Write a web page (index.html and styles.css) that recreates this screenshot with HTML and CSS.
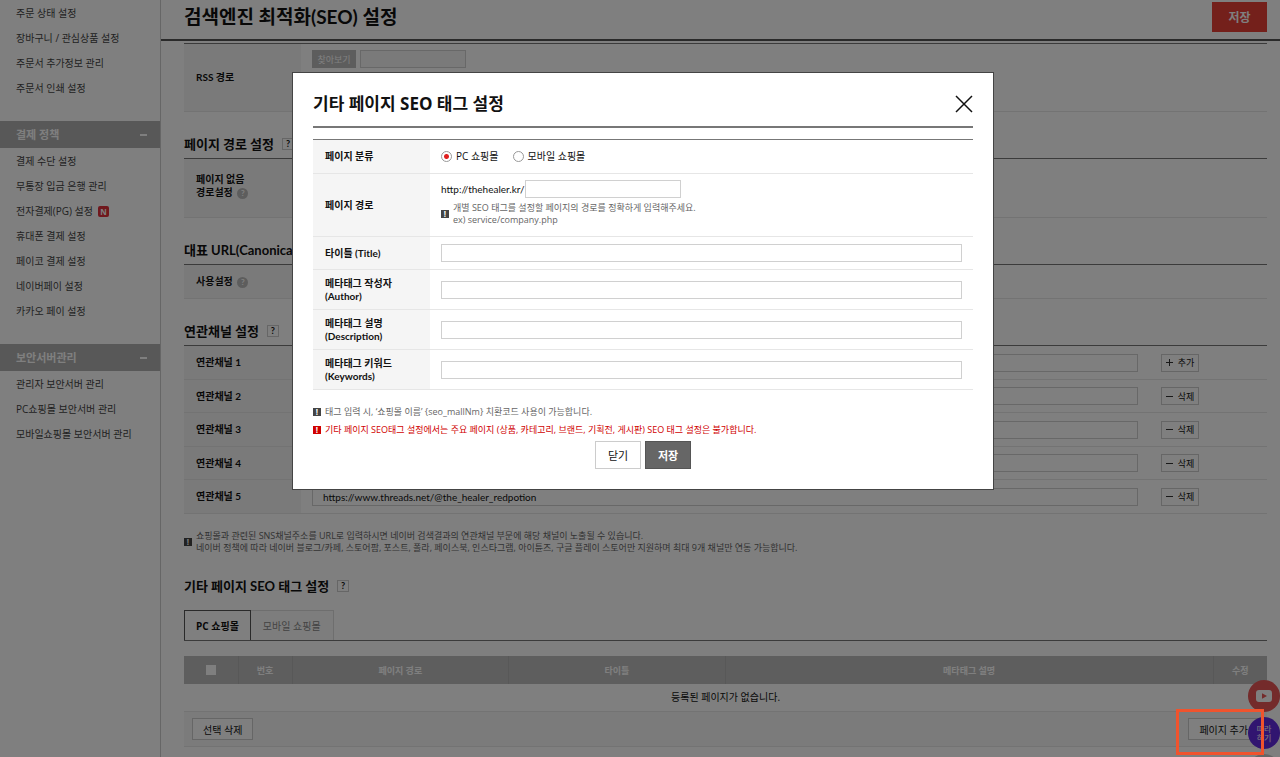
FILE: index.html
```html
<!DOCTYPE html>
<html lang="ko">
<head>
    <meta charset="UTF-8">
    <meta name="viewport" content="width=device-width, initial-scale=1.0">
    <title>검색엔진 최적화(SEO) 설정</title>
    <link rel="stylesheet" href="styles.css">
</head>
<body>

<div class="wrap">
    <!-- Left menu -->
    <nav class="sidebar">
        <ul>
            <li><a href="#">주문 상태 설정</a></li>
            <li><a href="#">장바구니 / 관심상품 설정</a></li>
            <li><a href="#">주문서 추가정보 관리</a></li>
            <li><a href="#">주문서 인쇄 설정</a></li>
        </ul>
        <h2>결제 정책 <span class="fold"></span></h2>
        <ul>
            <li><a href="#">결제 수단 설정</a></li>
            <li><a href="#">무통장 입금 은행 관리</a></li>
            <li><a href="#">전자결제(PG) 설정 <span class="new">N</span></a></li>
            <li><a href="#">휴대폰 결제 설정</a></li>
            <li><a href="#">페이코 결제 설정</a></li>
            <li><a href="#">네이버페이 설정</a></li>
            <li><a href="#">카카오 페이 설정</a></li>
        </ul>
        <h2>보안서버관리 <span class="fold"></span></h2>
        <ul>
            <li><a href="#">관리자 보안서버 관리</a></li>
            <li><a href="#">PC쇼핑몰 보안서버 관리</a></li>
            <li><a href="#">모바일쇼핑몰 보안서버 관리</a></li>
        </ul>
    </nav>

    <main class="main">
        <header class="page-header">
            <h1>검색엔진 최적화(SEO) 설정</h1>
            <button type="button" class="btn-save">저장</button>
        </header>

        <div class="content">
            <table class="form-table form-rss">
                <tr>
                    <th scope="row"><label for="rss">RSS 경로</label></th>
                    <td>
                        <div class="file-row">
                            <button type="button" class="btn-file">찾아보기</button>
                            <input type="text" id="rss" class="file-name">
                        </div>
                    </td>
                </tr>
            </table>

            <h3>페이지 경로 설정 <button type="button" class="help">?</button></h3>
            <table class="form-table form-path">
                <tr>
                    <th scope="row">페이지 없음<br>경로설정 <span class="tip">?</span></th>
                    <td></td>
                </tr>
            </table>

            <h3>대표 URL(Canonical URL) 설정 <button type="button" class="help">?</button></h3>
            <table class="form-table form-canonical">
                <tr>
                    <th scope="row">사용설정 <span class="tip">?</span></th>
                    <td></td>
                </tr>
            </table>

            <h3>연관채널 설정 <button type="button" class="help">?</button></h3>
            <table class="form-table form-channel">
                <tr>
                    <th scope="row"><label for="ch1">연관채널 1</label></th>
                    <td><input type="text" id="ch1"></td>
                    <td class="action"><button type="button" class="btn-small"><span class="plus"></span>추가</button></td>
                </tr>
                <tr>
                    <th scope="row"><label for="ch2">연관채널 2</label></th>
                    <td><input type="text" id="ch2"></td>
                    <td class="action"><button type="button" class="btn-small"><span class="minus"></span>삭제</button></td>
                </tr>
                <tr>
                    <th scope="row"><label for="ch3">연관채널 3</label></th>
                    <td><input type="text" id="ch3"></td>
                    <td class="action"><button type="button" class="btn-small"><span class="minus"></span>삭제</button></td>
                </tr>
                <tr>
                    <th scope="row"><label for="ch4">연관채널 4</label></th>
                    <td><input type="text" id="ch4"></td>
                    <td class="action"><button type="button" class="btn-small"><span class="minus"></span>삭제</button></td>
                </tr>
                <tr>
                    <th scope="row"><label for="ch5">연관채널 5</label></th>
                    <td><input type="text" id="ch5" value="https://www.threads.net/@the_healer_redpotion"></td>
                    <td class="action"><button type="button" class="btn-small"><span class="minus"></span>삭제</button></td>
                </tr>
            </table>

            <div class="notice notice-channel">
                <span class="mark">!</span>
                <p>쇼핑몰과 관련된 SNS채널주소를 URL로 입력하시면 네이버 검색결과의 연관채널 부문에 해당 채널이 노출될 수 있습니다.<br>네이버 정책에 따라 네이버 블로그/카페, 스토어팜, 포스트, 폴라, 페이스북, 인스타그램, 아이튠즈, 구글 플레이 스토어만 지원하며 최대 9개 채널만 연동 가능합니다.</p>
            </div>

            <h3>기타 페이지 SEO 태그 설정 <button type="button" class="help">?</button></h3>
            <div class="tabs">
                <button type="button" class="tab active">PC 쇼핑몰</button>
                <button type="button" class="tab">모바일 쇼핑몰</button>
            </div>

            <table class="list-table">
                <thead>
                    <tr>
                        <th class="col-s"><input type="checkbox" class="check-all" aria-label="전체 선택"></th>
                        <th class="col-s">번호</th>
                        <th class="col-m">페이지 경로</th>
                        <th class="col-m">타이틀</th>
                        <th>메타태그 설명</th>
                        <th class="col-s">수정</th>
                    </tr>
                </thead>
                <tbody>
                    <tr>
                        <td colspan="6">등록된 페이지가 없습니다.</td>
                    </tr>
                </tbody>
            </table>
            <div class="list-footer">
                <button type="button" class="btn-white">선택 삭제</button>
                <button type="button" class="btn-white">페이지 추가</button>
            </div>
        </div>
    </main>
</div>

<!-- Quick buttons -->
<div class="quick">
    <a href="#" class="quick-item youtube" aria-label="YouTube">
        <svg width="16" height="12" viewBox="0 0 16 12">
            <rect width="16" height="12" rx="3" fill="#fff"/>
            <path d="M6 3.2v5.6l5-2.8z" fill="#e85656"/>
        </svg>
    </a>
    <a href="#" class="quick-item follow">따라<br>하기</a>
    <a href="#" class="quick-item top" aria-label="TOP"></a>
</div>

<!-- Layer popup -->
<div class="dim">
    <form class="modal" role="dialog" aria-labelledby="modal-title">
        <div class="modal-header">
            <h2 id="modal-title">기타 페이지 SEO 태그 설정</h2>
            <button type="button" class="close" aria-label="창 닫기">
                <svg width="18" height="18" viewBox="0 0 18 18">
                    <path d="M1 1l16 16M17 1L1 17" stroke="#111" stroke-width="1.5" fill="none"/>
                </svg>
            </button>
        </div>

        <table class="form-table form-modal">
            <tr class="row-line">
                <th scope="row">페이지 분류</th>
                <td>
                    <div class="radios">
                        <label><input type="radio" name="device" checked>PC 쇼핑몰</label>
                        <label><input type="radio" name="device">모바일 쇼핑몰</label>
                    </div>
                </td>
            </tr>
            <tr class="row-path">
                <th scope="row"><label for="path">페이지 경로</label></th>
                <td>
                    <div class="path">
                        <span>http://thehealer.kr/</span><input type="text" id="path">
                    </div>
                    <div class="notice">
                        <span class="mark">!</span>
                        <p>개별 SEO 태그를 설정할 페이지의 경로를 정확하게 입력해주세요.<br>ex) service/company.php</p>
                    </div>
                </td>
            </tr>
            <tr class="row-title">
                <th scope="row"><label for="title">타이틀 (Title)</label></th>
                <td><input type="text" id="title"></td>
            </tr>
            <tr>
                <th scope="row"><label for="author">메타태그 작성자<br>(Author)</label></th>
                <td><input type="text" id="author"></td>
            </tr>
            <tr>
                <th scope="row"><label for="description">메타태그 설명<br>(Description)</label></th>
                <td><input type="text" id="description"></td>
            </tr>
            <tr>
                <th scope="row"><label for="keywords">메타태그 키워드<br>(Keywords)</label></th>
                <td><input type="text" id="keywords"></td>
            </tr>
        </table>

        <div class="modal-notes">
            <div class="notice"><span class="mark">!</span><p>태그 입력 시, ‘쇼핑몰 이름’ {seo_mallNm} 치환코드 사용이 가능합니다.</p></div>
            <div class="notice red"><span class="mark">!</span><p>기타 페이지 SEO태그 설정에서는 주요 페이지 (상품, 카테고리, 브랜드, 기획전, 게시판) SEO 태그 설정은 불가합니다.</p></div>
        </div>

        <div class="modal-buttons">
            <button type="button" class="btn-cancel">닫기</button>
            <button type="submit" class="btn-confirm">저장</button>
        </div>
    </form>
</div>

<div class="highlight"></div>

</body>
</html>
```
FILE: styles.css
```css
* {
    box-sizing: border-box;
}
body {
    margin: 0;
    font-family: "Open Sans", "Noto Sans CJK KR", sans-serif;
    font-size: 10px;
    line-height: 13px;
    color: #111;
    background-color: #fff;
    overflow: hidden;
}
h1, h2, h3, p, ul {
    margin: 0;
    padding: 0;
}
ul {
    list-style: none;
}
a {
    color: inherit;
    text-decoration: none;
}
button, input {
    font-family: inherit;
    font-size: 10px;
    color: inherit;
    border-radius: 0;
    margin: 0;
}
button {
    display: inline-flex;
    align-items: center;
    justify-content: center;
    padding: 0;
    cursor: pointer;
}
input[type="text"] {
    display: block;
    width: 100%;
    height: 18px;
    padding: 0 10px;
    border: 1px solid #d0d0d0;
    background-color: #fff;
}
.wrap {
    display: flex;
    min-height: 100vh;
}

/* sidebar */
.sidebar {
    flex: 0 0 161px;
    padding-top: 1px;
    border-right: 1px solid #ccc;
    color: #444;
}
.sidebar ul {
    margin-bottom: 20px;
}
.sidebar li a {
    display: flex;
    align-items: center;
    height: 25px;
    padding-left: 16px;
}
.sidebar h2 {
    display: flex;
    align-items: center;
    justify-content: space-between;
    height: 27px;
    margin-bottom: 1px;
    padding: 0 13px 0 16px;
    background-color: #b0b0b0;
    color: #fff;
    font-size: 11px;
}
.fold {
    width: 7px;
    height: 2px;
    background-color: #fff;
}
.new {
    width: 11px;
    height: 11px;
    margin-left: 5px;
    border-radius: 2px;
    background-color: #e0303a;
    color: #fff;
    font-size: 8px;
    font-weight: bold;
    line-height: 11px;
    text-align: center;
}

/* page */
.main {
    flex: 1;
    min-width: 0;
}
.page-header {
    display: flex;
    align-items: center;
    justify-content: space-between;
    height: 41px;
    padding: 0 13px 5px 23px;
    border-bottom: 2px solid #555;
}
.page-header h1 {
    font-family: Lato, "Noto Sans CJK KR", sans-serif;
    font-size: 19px;
    line-height: 24px;
}
.btn-save {
    width: 55px;
    height: 30px;
    border: 0;
    background-color: #e84036;
    color: #fff;
    font-size: 12px;
    font-weight: bold;
}
.content {
    padding: 2px 13px 0 23px;
}
.content h3 {
    display: flex;
    align-items: center;
    gap: 8px;
    height: 28px;
    margin-top: 18px;
    font-family: Lato, "Noto Sans CJK KR", sans-serif;
    font-size: 13px;
    line-height: 18px;
}
.help {
    width: 12px;
    height: 12px;
    border: 1px solid #ccc;
    background-color: #fff;
    font-size: 9px;
    font-weight: bold;
    line-height: 10px;
}
.tip {
    display: inline-block;
    width: 11px;
    height: 11px;
    margin-left: 2px;
    border-radius: 50%;
    background-color: #bbb;
    color: #fff;
    font-size: 8px;
    line-height: 11px;
    text-align: center;
    vertical-align: middle;
}

/* form table */
.form-table {
    width: 100%;
    border-collapse: collapse;
    border-top: 1px solid #777;
    font-family: Lato, "Noto Sans CJK KR", sans-serif;
}
.form-table th {
    width: 117px;
    padding: 0 0 0 12px;
    border-bottom: 1px solid #e6e6e6;
    background-color: #f5f5f5;
    text-align: left;
}
.form-table td {
    padding: 0 11px;
    border-bottom: 1px solid #e6e6e6;
}
.form-rss tr {
    height: 68px;
}
.form-rss td {
    vertical-align: top;
}
.file-row {
    display: flex;
    gap: 4px;
    padding-top: 6px;
}
.btn-file {
    width: 44px;
    height: 18px;
    border: 0;
    background-color: #bbb;
    color: #fff;
    font-size: 9px;
}
.file-row .file-name {
    width: 106px;
    background-color: #f5f5f5;
}
.form-path tr {
    height: 59px;
}
.form-path th {
    padding-bottom: 4px;
}
.form-canonical tr {
    height: 34px;
}
.form-channel tr {
    height: 34px;
}
.form-channel tr:nth-child(even) {
    height: 33px;
}
.form-channel .action {
    width: 118px;
    padding: 0 0 0 12px;
}
.btn-small {
    gap: 5px;
    width: 38px;
    height: 18px;
    border: 1px solid #ccc;
    background-color: #fff;
    font-size: 9px;
    vertical-align: middle;
}
.plus, .minus {
    width: 7px;
    height: 1px;
    background-color: #333;
}
.plus {
    height: 7px;
    background: linear-gradient(#333, #333) center / 7px 1px no-repeat, linear-gradient(#333, #333) center / 1px 7px no-repeat;
}

/* notice */
.notice {
    display: flex;
    align-items: center;
    gap: 4px;
    color: #666;
    font-family: "Open Sans", "Noto Sans CJK KR", sans-serif;
    font-size: 9px;
    line-height: 12px;
}
.mark {
    flex: none;
    width: 8px;
    height: 8px;
    background-color: #444;
    color: #fff;
    font-size: 8px;
    font-weight: bold;
    line-height: 8px;
    text-align: center;
}
.notice-channel {
    margin: 16px 0 18px;
}

/* tabs */
.tabs {
    display: flex;
    margin-top: 10px;
    border-bottom: 1px solid #777;
}
.tab {
    height: 30px;
    padding: 0 12px;
    border: 1px solid #ddd;
    border-width: 1px 1px 0 0;
    background-color: #fbfbfb;
    color: #888;
}
.tab.active {
    padding: 0 11px;
    border: 1px solid #555;
    border-bottom: 0;
    background-color: #fff;
    color: #111;
    font-weight: bold;
}

/* list */
.list-table {
    width: 100%;
    margin-top: 15px;
    border-collapse: collapse;
    table-layout: fixed;
}
.list-table th {
    height: 28px;
    padding: 0;
    border-right: 1px solid #b0b0b0;
    background-color: #bdbdbd;
    color: #fff;
    font-size: 9px;
}
.list-table th:last-child {
    border-right: 0;
}
.list-table td {
    height: 27px;
    padding: 0;
    text-align: center;
}
.col-s {
    width: 54px;
}
.col-m {
    width: 20%;
}
.check-all {
    display: block;
    width: 10px;
    height: 10px;
    margin: 0 auto;
    appearance: none;
    background-color: #fff;
}
.list-footer {
    display: flex;
    align-items: center;
    justify-content: space-between;
    height: 36px;
    padding: 0 8px;
    border-top: 1px solid #e6e6e6;
    border-bottom: 1px solid #e6e6e6;
    background-color: #f6f6f6;
}
.btn-white {
    height: 22px;
    padding: 0 10px;
    border: 1px solid #ccc;
    background-color: #fff;
}

/* quick buttons */
.quick {
    position: fixed;
    top: 680px;
    right: 0;
    display: flex;
    flex-direction: column;
    gap: 5px;
}
.quick-item {
    display: flex;
    align-items: center;
    justify-content: center;
    width: 32px;
    height: 32px;
    border-radius: 50%;
    color: #fff;
    font-size: 8px;
    line-height: 9px;
}
.youtube {
    background-color: #e85656;
}
.follow {
    background-color: #622ae0;
}
.top {
    background-color: #ccc;
}

/* layer popup */
.dim {
    position: fixed;
    inset: 0;
    display: flex;
    align-items: flex-start;
    justify-content: center;
    padding: 72px 0 0 6px;
    background-color: rgba(0, 0, 0, 0.5);
}
.modal {
    width: 100%;
    max-width: 702px;
    padding: 0 20px 20px;
    border: 1px solid #444;
    background-color: #fff;
}
.modal-header {
    display: flex;
    align-items: center;
    justify-content: space-between;
    height: 55px;
    padding-top: 8px;
    border-bottom: 2px solid #777;
}
.modal-header h2 {
    font-size: 17px;
    line-height: 22px;
}
.close {
    border: 0;
    background: none;
}
.form-modal {
    margin-top: 11px;
}
.form-modal tr {
    height: 40px;
}
.form-modal .row-line {
    height: 34px;
}
.form-modal .row-title {
    height: 33px;
}
.form-modal .row-path {
    height: 63px;
}
.form-modal .row-path td {
    padding-bottom: 4px;
}
.radios {
    display: flex;
    gap: 14px;
    font-family: "Open Sans", "Noto Sans CJK KR", sans-serif;
}
.radios label {
    display: flex;
    align-items: center;
    gap: 4px;
}
.radios input {
    width: 11px;
    height: 11px;
    appearance: none;
    border: 1px solid #999;
    border-radius: 50%;
    background-color: #fff;
}
.radios input:checked {
    background-image: radial-gradient(circle, #e02020 2px, transparent 3px);
}
.path {
    display: flex;
    align-items: center;
    margin-bottom: 4px;
}
.path input[type="text"] {
    width: 156px;
}
.modal-notes {
    display: flex;
    flex-direction: column;
    gap: 6px;
    margin-top: 16px;
}
.red {
    color: #d00000;
}
.red .mark {
    background-color: #d00000;
}
.modal-buttons {
    display: flex;
    justify-content: center;
    gap: 4px;
    margin-top: 5px;
}
.btn-cancel, .btn-confirm {
    width: 46px;
    height: 28px;
    border: 1px solid #ccc;
    background-color: #fff;
    font-size: 11px;
}
.btn-confirm {
    border-color: #555;
    background-color: #666;
    color: #fff;
    font-weight: bold;
}

/* marker round the add button */
.highlight {
    position: fixed;
    top: 709px;
    right: 16px;
    width: 88px;
    height: 46px;
    border: 3px solid #f0532d;
}
```
